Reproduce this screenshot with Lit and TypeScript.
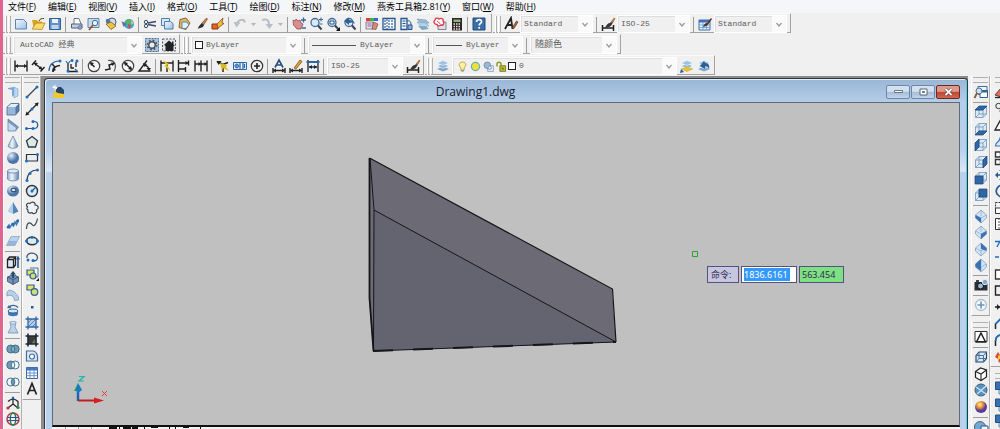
import { LitElement, html, svg, css, nothing } from "lit";
import { customElement } from "lit/decorators.js";

const N = "#24588f";
const K = "#222";

const cubeBase = svg`<path d="M2 6l4-4h8v8l-4 4H2z" fill="#dce9f6"/>`;
const cubeEdges = svg`<path d="M2.500 6l3.500-3.500h7.500V10L10 13.500H2.500zM2.500 6H10v7.500M10 6l3.500-3.500M6 2.500V10h7.500M6 10l-3.500 3.500" fill="none" stroke="#6f94bb" stroke-width=".8"/>`;
const face = (d: string) => svg`${cubeBase}${cubeEdges}<path d=${d} fill="#2f66a6" stroke="#1d4679" stroke-width=".7"/>`;
const iso = (d: string) => svg`<path d="M8 2l5.500 5v3L8 15 2.500 10V7z" fill="#d3e3f3" stroke="#7d9fc2" stroke-width=".8"/><path d="M8 2v6M2.500 7l5.500 3 5.500-3M8 9.500V15" stroke="#8babcb" stroke-width=".7" fill="none"/><path d=${d} fill="#3b73b1"/>`;
const dots = (...p: number[][]) => p.map(([x, y]) => svg`<circle cx=${x} cy=${y} r="1.500" fill="#1b6fc0"/>`);
const ink = (d: string, w = 1.3, c = K) => svg`<path d=${d} fill="none" stroke=${c} stroke-width=${w}/>`;
const solid = (d: string, c = K) => svg`<path d=${d} fill=${c}/>`;
const brush = svg`<path d="M8 8l5.500-6 1 1L10 10z" fill="#c98243" stroke="#4c2c16" stroke-width=".5"/><path d="M9.500 7.500c1 .5 1.500 1 1 2.500-1 2-4 2-6 2.500 1.500-1.500 2-4.500 5-5z" fill="#2b2b2b"/>`;
const lens = svg`<circle cx="7" cy="6.500" r="4" fill="#d8ebfa" stroke="#466c96" stroke-width="1.300"/><path d="M10 9.500l3.500 4" stroke="#37475c" stroke-width="2"/>`;
const layers = svg`<path d="M2 11l6-2.500 6 2.500-6 2.500z" fill="#7da4cc"/><path d="M2 8l6-2.500L14 8l-6 2.500z" fill="#8fb4d8" stroke="#fff" stroke-width=".5"/><path d="M2 5l6-2.500L14 5 8 7.500z" fill="#9fc1e1" stroke="#fff" stroke-width=".5"/>`;
const venn = (a: string, b: string, m: string) => svg`<circle cx="5.800" cy="8" r="4" fill=${a}/><circle cx="10.200" cy="8" r="4" fill=${b}/><path d="M8 4.700a4 4 0 0 1 0 6.600 4 4 0 0 1 0-6.600z" fill=${m}/><circle cx="5.800" cy="8" r="4" fill="none" stroke="#41708f"/><circle cx="10.200" cy="8" r="4" fill="none" stroke="#41708f"/>`;
const hatch = svg`<path d="M4 1.500v13M12 1.500v13M1.500 4h13M1.500 12h13" stroke="#2f66a6" stroke-width="1.300"/>`;

const ICONS: Record<string, unknown> = {
  new: svg`<path d="M2.500 3.500h8l3 3v6.500h-11z" fill="url(#sheet)" stroke="#5d87b3"/>`,
  open: svg`<path d="M2 4h5l1 1.500h4V13H4z" fill="#d9a520"/><path d="M2 13l4-6h9l-3 6.500z" fill="#fbdc6b" stroke="#a87a12" stroke-width=".7"/><path d="M9 5c1-2.500 3-2.500 5-2.500" stroke="#4b3a12" fill="none"/>`,
  save: svg`<path d="M2.500 2.500h11v11h-11z" fill="#5f92c9" stroke="#315e92"/><path d="M5 3h6v4H5z" fill="#e9f2fb"/><path d="M4.500 9h7v4h-7z" fill="#bcd4ec"/>`,
  print: svg`<path d="M5 8V2.500h5L12 8" fill="#fff" stroke="#697b95"/><path d="M2.500 8h10.500v4H2.500z" fill="#c3cedf" stroke="#4f6280"/><circle cx="11" cy="11.500" r="2" fill="#8fa4c0" stroke="#4f6280" stroke-width=".6"/>`,
  preview: svg`<path d="M2 2.500h11v9H2z" fill="#c7dcf1" stroke="#6087b0"/><circle cx="9" cy="7" r="2.700" fill="#eef6fd" stroke="#466c96"/><path d="M7 9l-4 5" stroke="#8b5a2b" stroke-width="1.800"/>`,
  publish: svg`<circle cx="9" cy="6" r="4" fill="#d2dae6" stroke="#4b5f7b"/><path d="M3 8l5-2 5 4-5 3.500z" fill="#f0c33c" stroke="#6e5310" stroke-width=".7"/><circle cx="5" cy="5" r="2.300" fill="#4a78ae"/>`,
  globe: svg`<circle cx="9" cy="8" r="5" fill="#4d9bd0"/><path d="M5 5l5-2 1 4-3 4z" fill="#57b36b"/><path d="M1.500 5l5 3-3 3z" fill="#5e6f91"/><path d="M8 8l3 1-2 4z" fill="#d8453a"/><path d="M11 4l2.500 3-2 2z" fill="#f2d04b"/>`,
  cut: svg`${ink("M6 7l8-1.500M6 8.500l8 1.500", 1.3, "#3a4b66")}<circle cx="4" cy="6" r="1.700" fill="none" stroke="#3a4b66"/><circle cx="4" cy="10" r="1.700" fill="none" stroke="#3a4b66"/>`,
  copy: svg`<path d="M2.500 2.500h8v7h-8z" fill="#dbe9f7" stroke="#4e7db0"/><path d="M5.500 5.500h6l2.500 2V13H5.500z" fill="url(#sheet)" stroke="#4e7db0"/>`,
  paste: svg`<path d="M4 3.500l6-1.500 4 5-4 6.500-7-2z" fill="#e1b868" stroke="#8b6524"/><path d="M6 6h5l2 3-3 3.500H6z" fill="#e6f0fa" stroke="#5c84ad"/>`,
  brush,
  match: svg`<path d="M2 8h6v5H2z" fill="#e6642a" stroke="#8a3310"/><path d="M7 8l6-6-1 5 2 .5L8 12z" fill="#f3bb35" stroke="#7d3c18" stroke-width=".7"/>`,
  undo: svg`${ink("M5 8c1-5 7-5.500 8-1.500", 2, "#b9bec6")}${solid("M1.500 6l7 .5-4 5z", "#b9bec6")}`,
  redo: svg`${ink("M3 4c5-1.500 7 0 7 5", 2, "#b9bec6")}${solid("M6.500 8h7.500l-3.500 5z", "#b9bec6")}`,
  pan: svg`<path d="M2 4l2 1 1-2 2 2 2-1 1 3 2 1-2 5H6L2.500 9z" fill="#d98d8d" stroke="#8d5057" stroke-width=".8"/><path d="M12.500 1.500v5M10 4h5M11 12h4" stroke="#3269a6" stroke-width="1.300"/>`,
  zoom: svg`${lens}<path d="M13 1.500v4M11 3.500h4M11.500 8h3" stroke="#3269a6"/>`,
  zoomWin: svg`${lens}<path d="M5 5h4v3H5z" fill="#fff" stroke="#2a4e78"/><path d="M11 15h4v-4z" fill="#111"/>`,
  zoomPrev: svg`${lens}<path d="M2 5l5-3.500V4c3 0 5 1 6 4-2-2-4-1.500-6-1v2z" fill="#2e5f9b"/>`,
  props: svg`<path d="M2 2h4v3H2z" fill="#e33b3b"/><path d="M6 2h4v3H6z" fill="#39b54a"/><path d="M10 2h4v3h-4z" fill="#3d62d8"/><path d="M2 6h7v7H2z" fill="#e8e2ee" stroke="#6f6480" stroke-width=".8"/><path d="M8 13l1.500-7L14 8l-2 5.500z" fill="#d68b73" stroke="#6a3a30" stroke-width=".6"/><path d="M3.500 8h4M3.500 10h4" stroke="#8a5ea0"/>`,
  design: svg`<path d="M2 2.500h12v11H2z" fill="#fff" stroke="#27568c" stroke-width="1.300"/><path d="M6 3v10M7 5h6M7 8h6M7 11h6M3 5h2M3 8h2M3 11h2" stroke="#4c7fb8" stroke-width="1.300" stroke-dasharray="2 1"/>`,
  palette: svg`<path d="M3 2.500h6v11H3z" fill="#eaf2fa" stroke="#27568c" stroke-width="1.300"/><path d="M4.500 5h3M4.500 7.500h3M4.500 10h3" stroke="#27568c"/><path d="M9 5c3-1 4 1 4 4" fill="none" stroke="#27568c"/><path d="M10 9h4v4.500h-4z" fill="#8cb2dc" stroke="#27568c"/>`,
  sheets: svg`<path d="M2 3l9 1 3 3-8 1z" fill="#97bcd9" stroke="#5f8cb0" stroke-width=".5"/><path d="M2 6l9 1 3 3-8 1z" fill="#b8d2e4" stroke="#6794b6" stroke-width=".5"/><path d="M3 10l8 .5 3 2.500-7 1z" fill="#7fa7c4"/>`,
  markup: svg`<path d="M6 6h8v7.500H6z" fill="#dedfe5" stroke="#7e8594"/><path d="M3 4c0-2 3-2.500 4-1 2-1.500 5 0 4 2 2 2 0 5-2 4-2 1.500-4 1-4-.5-3 0-4-3-2-4.500z" fill="#fff" stroke="#df3d49" stroke-width="1.400"/><path d="M5 5l3.500 3" stroke="#df3d49"/>`,
  calc: svg`<path d="M3 2h10v12.500H3z" fill="#2d2426"/><path d="M4.500 3.500h7v2.500h-7z" fill="#89b878"/><path d="M4.500 8h7M4.500 10.500h7M4.500 13h7" stroke="#e9dedd" stroke-width="1.300" stroke-dasharray="1.500 1"/>`,
  help: svg`<path d="M2 2h12v12H2z" fill="#3a6ea9" stroke="#204a7c"/><path d="M5.500 6c0-3.500 5.500-3 5 0-.3 1.500-2.300 1.500-2.300 3.500M8.200 11v1.700" fill="none" stroke="#fff" stroke-width="1.700"/>`,
  textStyle: svg`${ink("M2 13L8 2l1.500 11M4.500 9h5", 1.8)}<path d="M9 12l4.500-7 1.500 1-4 6.500z" fill="#b9683a" stroke="#3b2517" stroke-width=".6"/>`,
  dimStyle: svg`${ink("M2.500 9v6M13.500 9v6M2.500 12h11", 1.5)}<path d="M5 12c1-3 3-5 5-5l4-5 1 1-3.500 6c-1 2-3.500 2.500-6.500 3z" fill="#3a3531"/><path d="M11 6l3.500-4.500 1 1L12 7z" fill="#c58252"/>`,
  tableStyle: svg`<path d="M2 4h11v10H2z" fill="#e6f0fb" stroke="#3d70b4"/><path d="M2 4h11v2.500H2z" fill="#3d70b4"/><path d="M2 9h11M2 11.500h11M6 6v8M9.500 6v8" stroke="#6b97cd" stroke-width=".8"/><path d="M6 11c1-3 2-4 4-4l4-5 1 1-3.500 5c-1 2-3 2.500-5.500 3z" fill="#54392a"/>`,
  gear: svg`<path d="M1.500 1.500h13v13h-13z" fill="#a9c4df" stroke="#4b6e94" stroke-dasharray="2 1"/><circle cx="8" cy="8" r="3.200" fill="#e8edf2" stroke="#4a4f58" stroke-width="1.400"/><circle cx="8" cy="8" r="4.700" fill="none" stroke="#4a4f58" stroke-width="1.500" stroke-dasharray="1.700 2"/>`,
  home: svg`<path d="M1.500 2h13v12h-13z" fill="#dfe5eb" stroke="#556" stroke-dasharray="2 1.500"/><path d="M3 8l5-4.500L11 6V4.500h1.500V7.500L14 9h-1.500v5h-8V9z" fill="#222"/>`,
  dLinear: svg`${ink("M2 2.500v11M14 2.500v11M2 8h12", 1.4)}${solid("M2 8l3-2v4zM14 8l-3-2v4z")}`,
  dAligned: svg`${ink("M2 7l4-4.500M10.500 13.500l4-4.500M4 5l8.500 6.500", 1.5)}${solid("M4 4.500l4 .5-2.500 3zM12.500 11.500l-4-.5L11 8z")}`,
  dArc: svg`${ink("M2 13C2 7 6 3 12 3", 1.2, "#2b69a8")}${ink("M6 14c0-4 2-6 7-6.500M5 6l3 3", 1.5)}${solid("M5 14l1-5 3 3z")}${dots([13, 3])}`,
  dOrd: svg`${ink("M4 6v7.500h10M7 6v4h3M12 4v5", 1.3)}${ink("M2 3l2 3 2-3M11 11l3 3", 1.2, "#2b69a8")}${dots([4, 13], [8, 2.5], [13, 3])}`,
  dRadius: svg`<circle cx="8" cy="8" r="5.700" fill="#f6f6f6" stroke="#444" stroke-width="1.200"/>${ink("M8.500 9L4.500 5", 1.4)}${solid("M4 4l4 1-3 3z")}`,
  dJog: svg`${ink("M5 2.500c7-1 9 5 6 11", 1.2, "#555")}${ink("M2 12l5-1-1-4 5-1.500", 1.4)}${solid("M12 5l-4-.5 1.500 3.500z")}`,
  dDiam: svg`<circle cx="8" cy="8" r="5.700" fill="#f6f6f6" stroke="#444" stroke-width="1.200"/>${ink("M4.500 4.500l7 7", 1.4)}${solid("M4 4l4 1-3 3zM12 12l-4-1 3-3z")}`,
  dAng: svg`${ink("M13.500 13H2L10 2.500", 1.4)}${ink("M7 7c3 0 5 3 5 5", 1.3)}${solid("M6 5l4 1-2.500 3zM9.500 10h4.500l-2 3z")}`,
  dQuick: svg`${ink("M2 2.500v11M14 2.500v11M8 6v8M2 5h12", 1.4)}${solid("M4 2l6 4-2 1 4 6-7-5 2-1z", "#e2c318")}`,
  dBase: svg`${ink("M2.500 2v12M2.500 5h10M12.500 2.500v5M2.500 11h7M9.500 9v5", 1.4)}${solid("M12.500 5l-3-2v4z")}`,
  dCont: svg`${ink("M2 2.500v11M8 2.500v11M14 2.500v11M2 6h12", 1.4)}${solid("M8 6L5.500 4v4zM14 6l-2.500-2v4z")}`,
  leader: svg`${ink("M2 3.500l6 3 5-2M8 6v8", 1.5)}${solid("M5 5l7 2-1 2 3 4-6-3-1 3z", "#d9bb1f")}${solid("M1.500 3h5l-3 4z")}`,
  tol: svg`<path d="M1.500 4.500h13v7h-13z" fill="#e3eefa" stroke="#2b69a8"/>${ink("M8 4.500v7M11 4.500v7M12.500 6v4", 1.2, "#2b69a8")}<circle cx="4.800" cy="8" r="1.800" fill="none" stroke="#2b69a8"/>${ink("M4.800 5.500v5M2.500 8h5", 0.8, "#2b69a8")}`,
  center: svg`<circle cx="8" cy="8" r="5.700" fill="none" stroke="#333" stroke-width="1.200"/>${ink("M8 5v6M5 8h6", 1.6)}`,
  dEdit: svg`${ink("M4 9.500l4-7.500 4 7.500M5.500 7h5", 1.6, "#24507f")}${ink("M2 10v5M14 10v5M2 12.500h12", 1.4)}${solid("M2 12.500l3-2v4zM14 12.500l-3-2v4z")}`,
  dText: svg`${ink("M2 10v5M14 10v5M2 12.500h12", 1.4)}<path d="M6 10l6-8 2 1.500L8 11z" fill="#e0a32c" stroke="#6b3d14" stroke-width=".7"/>${solid("M2 12.500l3-2v4zM14 12.500l-3-2v4z")}`,
  dUpd: svg`${ink("M3 2v12M13 2v12", 1.3)}${ink("M1.500 4h13M4 9h8", 1.8, "#2b69a8")}${solid("M4 9l3-2v4zM12 9L9 7v4z")}`,
  layers,
  layersBack: svg`${layers}<path d="M2 11l6-2.500 6 2.500-6 3z" fill="#e3c03c"/><path d="M1 15l1-4 3 3z" fill="#245a97"/>`,
  layerPrev: svg`${layers}<path d="M4 8l4-5 1 2c3 0 5 2 4 6-1-2-2-3-4-3v3z" fill="#2d5f96"/>`,
  bulb: svg`<path d="M8 2.500c5 0 5 5 2 7v3H6v-3C3 7.500 3 2.500 8 2.500z" fill="#fff2a0" stroke="#a99335"/><path d="M6.500 13.500h3" stroke="#555"/>`,
  sun: svg`<circle cx="8" cy="8" r="5" fill="#f5df38" stroke="#5eb0b8" stroke-width="1.500"/>`,
  freeze: svg`<path d="M7 7h7v7H7z" fill="#e9f0f7" stroke="#8498b1"/><circle cx="6.500" cy="6.500" r="4" fill="#9db9d6" stroke="#6788ad"/><circle cx="9.500" cy="9.500" r="2" fill="#e4eef8" stroke="#6788ad"/>`,
  lock: svg`<path d="M6 7h7v7H6z" fill="#b6bf2d" stroke="#6d7418"/><path d="M8 10h2v2" stroke="#5c6212" fill="none"/><path d="M2.500 8V5c0-3 5-3 5 0v2" fill="none" stroke="#8f9820" stroke-width="1.800"/>`,
  polysolid: svg`<path d="M3 4l6-1v8l-2 2V6L3 5z" fill="#7ba8d8"/><path d="M9 3l4 2v7l-4 2z" fill="#bcd7f1" stroke="#78a2cd" stroke-width=".6"/>`,
  box: svg`<path d="M2 6l4-3.500h8V10l-3.500 4H2z" fill="#5578a5"/><path d="M2 6h8.500v8H2z" fill="#98b7d8"/><path d="M2 6l4-3.500h8L10.500 6z" fill="#e3eef9"/><path d="M2 6l4-3.500h8V10l-3.500 4H2z" fill="none" stroke="#45678f" stroke-width=".8"/>`,
  wedge: svg`<path d="M3 2l10.500 8-3 4H3z" fill="#7397c0"/><path d="M3 5l8 6-1 3H3z" fill="#c5daee"/><path d="M3 2l10.500 8-3 4H3z" fill="none" stroke="#5578a1" stroke-width=".7"/>`,
  cone: svg`<path d="M8 2l5 10c-1 3-9 3-10 0z" fill="url(#metal)" stroke="#6584a8" stroke-width=".8"/>`,
  sphere: svg`<circle cx="8" cy="8" r="6" fill="url(#ball)"/>`,
  cylinder: svg`<path d="M2.500 4v8c1 2.500 10 2.500 11 0V4z" fill="url(#metal)"/><ellipse cx="8" cy="4" rx="5.500" ry="2" fill="#dfeaf6" stroke="#6584a8" stroke-width=".8"/><path d="M2.500 4v8c1 2.500 10 2.500 11 0V4" fill="none" stroke="#6584a8" stroke-width=".8"/>`,
  torus: svg`<ellipse cx="8" cy="8" rx="6" ry="5.500" fill="url(#ball)"/><ellipse cx="8.500" cy="7" rx="2.500" ry="1.700" fill="#eff4fa" stroke="#31557f" stroke-width="1.200"/>`,
  pyramid: svg`<path d="M8 2l5.500 9.500L8 14z" fill="#5684b6"/><path d="M8 2L2.500 11.500 8 14z" fill="#b3cfeb"/>`,
  helix: svg`${ink("M2 12l2-3 1 2.500 2-3.500 1.500 2 1.500-4 1.500 2.500 2-5", 1.5, "#4676ad")}${dots([3.500, 11], [8, 8], [12.500, 5])}`,
  surface: svg`<path d="M6 3.500h8.500L10 12.500H1.500z" fill="#96b6d9"/><path d="M6 3.500h8.500L12 8H4z" fill="#b9d1ea"/><path d="M6 3.500h8.500L10 12.500H1.500z" fill="none" stroke="#86a5c7" stroke-width=".7"/>`,
  extrude: svg`<path d="M2.500 5.500h6v8h-6zM2.500 5.500l2-2.500h6L8.500 5.500M10.500 3v8l-2 2.500" fill="#dce8f4" stroke="#222" stroke-width="1.300"/><path d="M13 14V4" stroke="${N}" stroke-width="1.600"/><path d="M13 1.500l2 4h-4z" fill="#245a97"/>`,
  presspull: svg`<path d="M2.500 7L8 4.500 13.500 7v4.500L8 14.500l-5.500-3z" fill="#7292b8" stroke="#324a69" stroke-width=".8"/><path d="M2.500 7L8 9.500 13.500 7M8 9.500v5" fill="none" stroke="#324a69" stroke-width=".8"/><path d="M8 1l3 3.500H9V8H7V4.500H5z" fill="#29496f"/>`,
  sweep: svg`<path d="M2 6c1-4 4-3 7-1s5 5 4.500 8l-4 .5C9 9 6 7 2 9z" fill="#b9d0e8" stroke="#7195bb" stroke-width=".8"/>`,
  revolve: svg`<path d="M3 8h10v3c0 3-10 3-10 0z" fill="#3e79b8"/><ellipse cx="8" cy="8" rx="5" ry="2" fill="#d5e5f5" stroke="#35659a"/><path d="M4 4.500c2-3 7-2.500 9 0" fill="none" stroke="#35659a" stroke-width="1.300"/><path d="M2 5l4.500.5L4 2z" fill="#35659a"/>`,
  loft: svg`<path d="M5 2h6l-1 5 3 6H3l3-6z" fill="#bcd1e8" stroke="#7092b7" stroke-width=".8"/><ellipse cx="8" cy="2.800" rx="3" ry="1.200" fill="#eaf2fa" stroke="#7092b7" stroke-width=".7"/>`,
  union: venn("#6d9cb3", "#6d9cb3", "#88b0c3"),
  subtract: venn("#6d9cb3", "#f4f8fb", "#f4f8fb"),
  intersect: venn("#f4f8fb", "#f4f8fb", "#6d9cb3"),
  move3: svg`${ink("M8 2v7l-5 4M8 9l5 4M3 6.500c3-3 7-3 10 0v5", 1.2)}<circle cx="3" cy="13" r="1.600" fill="#c0392b"/><circle cx="13" cy="12.500" r="1.600" fill="#2a8a3c"/><path d="M8 1l2 3.500H6z" fill="#1f5fa8"/>`,
  rotate3: svg`<circle cx="8" cy="8" r="6" fill="#eef" stroke="#c23a3a" stroke-width="1.500"/><ellipse cx="8" cy="8" rx="2.700" ry="6" fill="none" stroke="#277a45" stroke-width="1.300"/>${ink("M2 6.500h12M2 9.500h12", 1.2, "#31508f")}`,
  line: svg`${ink("M3 13L13 3", 1.2, "#38454f")}${dots([3, 13], [13, 3])}`,
  xline: svg`${ink("M2 14L14 2", 1.2)}${solid("M1.500 14.500l1-4 3 3zM14.500 1.500l-1 4-3-3z")}${dots([8, 8])}`,
  pline: svg`${ink("M2 11.500h8c5 0 5-7 0-7H9", 1.2, "#28568b")}${dots([2.5, 11.5], [9, 11.5], [9, 4.5])}`,
  polygon: svg`<path d="M8 2.500l5.500 4.200-2 6.300h-7l-2-6.300z" fill="#dcebe9" stroke="#2e3b43" stroke-width="1.300"/>`,
  rect: svg`<path d="M2.500 4.500h11v6.500h-11z" fill="#e8eef4" stroke="#333" stroke-width="1.200"/>${dots([13.500, 4.500], [2.500, 11])}`,
  arc: svg`${ink("M3 13.500C3 7 7 3 13.500 3", 1.2, "#38454f")}${dots([3, 13.500], [6, 6.500], [13.500, 3])}`,
  circle: svg`<circle cx="8" cy="8" r="5.500" fill="#dbe9f2" stroke="#28333c" stroke-width="1.400"/>${ink("M8 8l3.500-3.500", 1.2, N)}${dots([8, 8])}`,
  cloud: svg`<path d="M4 7c-3-1-1-5 2-3.500C8 1 12 2.500 11 5c4 0 4 4 1.500 5 1 3-3 5-4.500 2.500C5 14 3 12 4 10c-2-1-1-3 0-3z" fill="#eef3f5" stroke="#3b454d" stroke-width="1.200"/>`,
  spline: svg`${ink("M2.500 13C3 4 7 7 8.500 9s4-1 5-6.500", 1.2, "#38454f")}`,
  ellipse: svg`<ellipse cx="8" cy="8" rx="5.500" ry="3.700" fill="#d7ebf0" stroke="#28333c" stroke-width="1.400"/>${dots([2.500, 8], [8, 4.300], [13.500, 8])}`,
  earc: svg`${ink("M3 9c-1-7 11-6 10.500 0-.5 3-3 3-5 2.500", 1.3, "#40566f")}${dots([4, 11], [9, 11.500])}`,
  insert: svg`<path d="M6 2h8v9h-4" fill="#f3f5f7" stroke="#4e7297"/><path d="M3 4h7v5H3z" fill="#e5e05f" stroke="#2b5f98" stroke-width="1.200"/><circle cx="9" cy="10" r="3" fill="#d2db74" stroke="#2b5f98" stroke-width="1.200"/><path d="M12 15h3v-3z" fill="#111"/>`,
  block: svg`<path d="M3 3h7v5H3z" fill="#e5e05f" stroke="#2b5f98" stroke-width="1.200"/><circle cx="10.500" cy="10" r="3.300" fill="#d2db74" stroke="#2b5f98" stroke-width="1.200"/>`,
  point: svg`<path d="M7 7h2.500v2.500H7z" fill="#1b5fa8"/>`,
  hatch: svg`<path d="M4 4h8v8H4z" fill="#b5cde5"/><path d="M4 8l4-4M4 12l8-8M8 12l4-4" stroke="#5e8abb"/>${hatch}`,
  gradient: svg`<path d="M4 4h8v8H4z" fill="#3c3c35"/><path d="M7 12l5-6v6z" fill="#7a7a35"/><path d="M4 1.500v13M12 1.500v13M1.500 4h13M1.500 12h13" stroke="#1b2740" stroke-width="1.600"/>`,
  region: svg`<path d="M2.500 3h7c4 1 4.500 5 4 10h-11z" fill="#dce9f5" stroke="#42709f" stroke-width="1.200"/><circle cx="8" cy="8.500" r="2.500" fill="#fff" stroke="#42709f" stroke-width="1.200"/>`,
  table: svg`<path d="M2.500 2.500h11v11h-11z" fill="#fff" stroke="#3567a4"/><path d="M2.500 2.500h11v3h-11z" fill="#4279bb"/>${ink("M2.500 8h11M2.500 10.700h11M6 5v8.500M10 5v8.500", 0.9, "#5b8bc6")}`,
  mtext: svg`${ink("M3.500 13.500L8 2.500l4.500 11M5 9.500h6", 1.7)}`,
  views: svg`<path d="M5 2.500h9v8H5z" fill="#f2f6fa" stroke="#3c6ea5"/><path d="M7 6.500h7.500v7H7z" fill="#fff" stroke="#2a5c96"/><path d="M7 6.500h7.500v2H7z" fill="#2f66a6"/><circle cx="6" cy="7" r="3" fill="#cfe0ee" stroke="#55718e"/><path d="M4 9l-2.500 5" stroke="#8b5a2b" stroke-width="1.800"/>`,
  top: face("M2 6l4-4h8l-4 4z"),
  bottom: face("M2 14l4-4h8l-4 4z"),
  left: face("M2 6l4-4v8l-4 4z"),
  right: face("M10 6l4-4v8l-4 4z"),
  front: face("M2 6h8v8H2z"),
  back: face("M6 2h8v8H6z"),
  sw: iso("M2.500 7L8 10v5l-5.500-5z"),
  se: iso("M13.500 7L8 10v5l5.500-5z"),
  ne: iso("M8 2l5.500 5v3L8 8z"),
  nw: iso("M8 2L2.500 7v3L8 14V8z"),
  camera: svg`<path d="M1.500 5h13v8.500h-13z" fill="#2a2f36"/><path d="M3 3h3v2H3z" fill="#444"/><circle cx="7.500" cy="9" r="3" fill="#9db9d4" stroke="#111"/><circle cx="12" cy="5" r="2.700" fill="#7fa7cf" stroke="#e4ecf4"/>`,
  orbit: svg`<circle cx="8" cy="8" r="5.500" fill="#f4f8fb" stroke="#a9bccf" stroke-width="1.300"/>${ink("M8 4.500v7M4.500 8h7", 1.6, "#6b94bd")}`,
  wire2d: svg`<path d="M2 2.500h12v10H2z" fill="#fff" stroke="#333"/>${ink("M8 4l4.500 9h-9z", 1.5)}`,
  wire3d: svg`<path d="M3 6.500l3-3.500h7.500v6.500L10.500 13H3z" fill="#dbe8f5" stroke="#1f3c60" stroke-width="1.100"/>${ink("M3 6.500h7.500V13M10.500 6.500L13.500 3M6 3v6.500h7.500M6 9.500L3 13", 1, "#44719f")}`,
  hidden: svg`<path d="M2.500 5.500l5-3.500 6 2v7L8 14.500l-5.500-3z" fill="#fff" stroke="#222" stroke-width="1.200"/>${ink("M2.500 5.500L8 8l5.500-4M8 8v6.500", 1.1)}`,
  realistic: svg`<circle cx="8" cy="8" r="6" fill="#5293c3" stroke="#4a5b6e"/>${ink("M3 5l10 7M13 4L4 12", 1.3, "#cfe5f4")}`,
  conceptual: svg`<circle cx="8" cy="8" r="6" fill="url(#warm)"/>`,
  manage: svg`<circle cx="7" cy="7" r="5.500" fill="#76a9d1" stroke="#47678a"/><path d="M8 6h7v7H8z" fill="#eef5fc" stroke="#27568c"/>`,
  erase: svg`<path d="M1 11l6-7 5 3-5 6z" fill="#e46a5d" stroke="#5b4340"/>${ink("M1 13.500h9")}`,
  copy2: svg`<circle cx="4.500" cy="5" r="2.700" fill="none" stroke="#333"/><circle cx="9" cy="10" r="3" fill="none" stroke="#333"/>`,
  mirror: svg`<path d="M7 2v11H1z" fill="#fff" stroke="#222" stroke-width="1.300"/><path d="M9 2v11h5z" fill="#5b90c8"/>`,
  offset: svg`<path d="M1.500 12c0-5 4-3 4.500-8 4-2 7 2 7 8z" fill="#d7e9fa" stroke="#3c77b5" stroke-width="1.200"/>`,
  array: svg`<path d="M1.500 2h5v5h-5zM1.500 9.500h5v5h-5zM9 2h5v5H9z" fill="#fff" stroke="#333" stroke-width="1.400"/>`,
  move: svg`${ink("M8 2v12M2 8h12", 1.6, N)}${solid("M1 8l3-3v6zM8 1l3 3H5zM8 15l3-3H5z", N)}`,
  rotate: svg`${ink("M10 3.500C4 0 0 8 4 12s9 2 9-3", 1.7, N)}`,
  scale: svg`<path d="M1.500 2.500h12v11h-12z" fill="#eef3f7" stroke="#333" stroke-dasharray="2 1"/><path d="M1.500 8h8v5.500h-8z" fill="#fff" stroke="#333"/>`,
  stretch: svg`<path d="M1.500 2.500h12v11h-12z" fill="#fff" stroke="#333"/><path d="M5 2v12" stroke="#555" stroke-dasharray="2 1"/>`,
  trim: svg`${ink("M1 8.500h5l4-6M6 8l-3 6", 1.3, "#1b6fc0")}`,
  extend: svg`${ink("M1 8h4M7 8h6", 1.5, "#1b6fc0")}`,
  breakAt: svg`<path d="M1.500 4h12v9h-12z" fill="#fff" stroke="#333" stroke-width="1.300"/>`,
  brk: svg`${ink("M7 4H1.500v9h12V4", 1.4)}${dots([7, 4])}`,
  join: svg`${ink("M1 8h12", 1.6)}${solid("M6 8L3 5v6z")}`,
  chamfer: svg`${ink("M1.500 14V9L8 2.500h6", 1.5)}${ink("M1.500 9L8 2.500", 1.7, "#1b6fc0")}`,
  fillet: svg`${ink("M1.500 14v-5c0-4 3-6 6-6H14", 1.5)}${ink("M1.500 9c0-4 3-6 6-6", 1.7, "#1b6fc0")}`,
  explode: svg`<path d="M1 9l3-5 2 3 5-5-1 6 3 2-5 1-3 4-1-4z" fill="#dd4a2f"/><path d="M4 8l4-2-1 4-3 2z" fill="#f3d23e"/>`,
  order: svg`<path d="M5 6h9v8H5z" fill="#cddff0" stroke="#6b8db1"/><path d="M1.500 2h8v7.500h-8z" fill="#3a70ad" stroke="#234e80"/>`,
};

const S = "|";
const FILE_BAR = ["new", "open", "save", S, "print", "preview", "publish", "globe", S, "cut", "copy", "paste", "brush", "match", S, "undo", "v", "redo", "v", S, "pan", "zoom", "zoomWin", "zoomPrev", S, "props", "design", "palette", "sheets", "markup", "calc", S, "help"];
const DIM_BAR = ["dLinear", "dAligned", "dArc", "dOrd", S, "dRadius", "dJog", "dDiam", "dAng", S, "dQuick", "dBase", "dCont", S, "leader", "tol", "center", S, "dEdit", "dText", "dUpd", S];
const SOLIDS = ["polysolid", "box", "wedge", "cone", "sphere", "cylinder", "torus", "pyramid", "helix", "surface", S, "extrude", "presspull", "sweep", "revolve", "loft", S, "union", "subtract", "intersect", S, "move3", "rotate3"];
const DRAW = ["line", "xline", "pline", "polygon", "rect", "arc", "circle", "cloud", "spline", "ellipse", "earc", "insert", "block", "point", "hatch", "gradient", "region", "table", "mtext"];
const VIEWS = ["views", S, "top", "bottom", "left", "right", "front", "back", S, "sw", "se", "ne", "nw", S, "camera", S, "orbit"];
const STYLES = ["wire2d", S, "wire3d", "hidden", "realistic", "conceptual", S, "manage"];
const MODIFY = ["erase", "copy2", "mirror", "offset", "array", "move", "rotate", "scale", "stretch", "trim", "extend", "breakAt", "brk", "join", "chamfer", "fillet", "explode"];

const MENUS: [string, string][] = [["文件", "F"], ["编辑", "E"], ["视图", "V"], ["插入", "I"], ["格式", "O"], ["工具", "T"], ["绘图", "D"], ["标注", "N"], ["修改", "M"], ["燕秀工具箱2.81", "Y"], ["窗口", "W"], ["帮助", "H"]];

@customElement("app-root")
export class AppRoot extends LitElement {
  static styles = css`
    :host {
      display: flex;
      height: 100vh;
      overflow: hidden;
      background: #f0f0f0;
      color: #1c1c1c;
      font: 10px "Noto Sans", "Noto Sans CJK SC", sans-serif;
    }
    *, *::before, *::after { box-sizing: border-box; }
    button, select, input { font: inherit; color: inherit; margin: 0; padding: 0; border: 0; background: none; }
    svg { display: block; flex: none; }
    .defs { position: absolute; width: 0; height: 0; }
    .edge { flex: none; width: 3px; background: #e0648f; }
    .app { flex: 1; min-width: 0; display: flex; flex-direction: column; }

    .menu { flex: none; display: flex; gap: 12px; height: 13px; padding-left: 5px; background: #f5f6f9; }
    .menu button { flex: none; height: 13px; white-space: nowrap; color: #000; font: 9px/12px "Open Sans", "Noto Sans CJK SC", sans-serif; }

    .row { flex: none; display: flex; gap: 1px; height: 21px; }
    .bar {
      display: flex; align-items: center; height: 20px; padding: 2px 2px 0;
      border-right: 1px solid #a3a3a3; border-bottom: 1px solid #a3a3a3;
      border-top: 1px solid #fbfbfb;
    }
    .bar.wide { padding-right: 4px; }
    .grip {
      flex: none; width: 6px; height: 17px; margin-right: 1px;
      border-left: 1px solid #fff; border-right: 1px solid #b0b0b0;
    }
    .grip::before { content: ""; display: block; width: 3px; height: 17px; border-left: 1px solid #b0b0b0; border-right: 1px solid #fff; }
    .tool { flex: none; width: 17px; height: 17px; display: grid; place-items: center; }
    .drop { flex: none; width: 10px; height: 17px; display: grid; place-items: center; }
    .sep { flex: none; width: 5px; height: 15px; display: grid; justify-content: center; }
    .sep::before { content: ""; width: 1px; background: #9c9c9c; }

    .combo {
      flex: none; display: flex; align-items: center; height: 18px; margin: 0 1px; width: 73px;
      padding-left: 3px; background: #f0f0f0; border: 1px solid #fff; box-shadow: inset 1px 1px 0 #dedede;
      color: #5c5c5c; font: 8px/16px "Liberation Mono", "Noto Sans CJK SC", monospace;
    }
    .combo select { flex: 1; min-width: 0; height: 16px; appearance: none; outline: 0; }
    .combo .chev { width: 14px; height: 16px; background: #fafafa; }
    .combo .swatch { flex: none; width: 8px; height: 8px; margin: 0 3px 0 0; border: 1px solid #222; background: #fff; }
    .combo .tiny { display: grid; width: 13px; place-items: center; }
    .combo .rule { flex: none; height: 1px; background: #555; margin-right: 4px; }
    .combo .long { width: 44px; }
    .combo .short { width: 26px; }
    .combo.dims { width: 76px; }
    .workspace { width: 129px; padding-left: 6px; }
    .color { width: 110px; }
    .linetype { width: 117px; }
    .weight { width: 91px; }
    .plot { width: 87px; padding-left: 4px; font-size: 9px; }
    .layer { width: 225px; }

    .work { flex: 1; min-height: 0; display: flex; }
    .dock { flex: none; display: flex; flex-direction: column; gap: 5px; width: 19px; overflow: hidden; }
    .strip {
      flex: none; padding: 1px 1px 2px; display: flex; flex-direction: column; align-items: center;
      border-right: 1px solid #b0b0b0; border-bottom: 1px solid #a3a3a3; border-left: 1px solid #fff;
    }
    .strip .grip { width: 15px; height: 6px; margin: 0 0 1px; border: 0; border-top: 1px solid #b0b0b0; border-bottom: 1px solid #b0b0b0; }
    .strip .grip::before { display: none; }
    .strip .tool { height: 16px; }
    .strip .tool:nth-child(odd) { height: 17px; }
    .strip .sep { width: 15px; height: 4px; align-content: center; }
    .strip .sep::before { width: 15px; height: 1px; }
    .dock.cut { width: 10px; }
    .dock.cut .strip { width: 24px; }

    .mdi { flex: 1; min-width: 0; display: flex; padding: 2px 0 0 3px; background: #8b8b8b; margin-right: 3px; }
    .window {
      flex: 1; min-width: 0; display: flex; flex-direction: column;
      border: 1px solid #33373c; border-bottom: 0; border-radius: 4px 4px 0 0;
      background: linear-gradient(#9ab6d6 0, #b5cee9 24px, #b9d1ea 70px, #d9e8f6 92px, #b9d1ea 94px);
      box-shadow: inset 1px 1px 0 #e4eef8, inset -1px 0 0 #4fd0ea;
    }
    .title { flex: none; display: flex; align-items: center; height: 23px; padding: 2px 7px 0; }
    .title h1 { flex: 1; margin: 0; text-align: center; font: 12px/20px "Open Sans", "Noto Sans", sans-serif; color: #16202c; }
    .controls { display: flex; gap: 1px; }
    .controls button {
      width: 24px; height: 14px; display: grid; place-items: center; border: 1px solid #6f88a6; border-radius: 2px;
      background: linear-gradient(#d3e0ef 45%, #a5bcd6 50%, #c2d5ea);
    }
    .controls .close { border-color: #6b2b25; background: linear-gradient(#dc9a8c 45%, #bd4430 50%, #d0694f); }
    .canvas {
      flex: 1; min-height: 0; position: relative; margin: 0 7px; background: #c0c0c0;
      border: 1px solid #5e6a78; border-bottom: 2px solid #111;
    }
    .canvas > svg { position: absolute; inset: 0; width: 100%; height: 100%; }
    .canvas > .ucs { inset: auto auto 19px 20px; width: 40px; height: 40px; }
    .prompt { position: absolute; left: 654px; top: 163px; display: flex; gap: 2px; font: 9px/15px "Noto Sans", "Noto Sans CJK SC", sans-serif; color: #2d2d50; }
    .prompt > * { height: 17px; border: 1px solid #55527f; }
    .prompt label { width: 32px; padding-left: 3px; background: #c8c6df; }
    .prompt .field { display: flex; align-items: center; width: 56px; padding-left: 2px; background: #fff; }
    .prompt .field input { width: 46px; height: 13px; background: #3399ff; color: #fff; outline: 0; }
    .prompt .second { width: 45px; padding-left: 2px; background: #7fe083; outline: 0; }
    .tabs { flex: none; height: 2px; margin: 0 7px; background: #f4f4f4; overflow: hidden; }
  `;

  private icon(name: string, size = 16) {
    return html`<svg width=${size} height=${size} viewBox="0 0 16 16" aria-hidden="true">${ICONS[name]}</svg>`;
  }

  private tool(name: string) {
    if (name === S) return html`<span class="sep"></span>`;
    if (name === "v")
      return html`<button class="drop" aria-label="more"><svg width="5" height="3"><path d="M0 0h5L2.500 3z" fill="#b5b5b5" /></svg></button>`;
    return html`<button class="tool" aria-label=${name}>${this.icon(name)}</button>`;
  }

  private combo(kind: string, label: string, value: string, prefix: unknown = nothing) {
    return html`<div class="combo ${kind}">
      ${prefix}<select aria-label=${label}><option>${value}</option></select>
      <svg class="chev" viewBox="0 0 14 16"><path d="M4.500 7L7 10l2.500-3" fill="none" stroke="#999" stroke-width="1.200" /></svg>
    </div>`;
  }

  private strip(tools: string[]) {
    return html`<div class="strip"><span class="grip"></span>${tools.map((t) => this.tool(t))}</div>`;
  }

  private drawing() {
    return html`<svg>
      <path d="M317 55L559 186l4 53-243 9-4-53z" fill="#6c6b75" />
      <path d="M321 107l242 132-243 9z" fill="#646370" />
      <g fill="none" stroke="#16161a">
        <path d="M316.500 55L559.500 186l3.500 53" stroke-width="1.200" />
        <path d="M317 55l4 52 242 132M321 107l-.500 141" stroke-width="1" />
        <path d="M316.500 55v140l4 53" stroke-width="1.800" />
        <path d="M320 248l243-9" stroke-width="1" />
        <path d="M320 248l243-9" stroke-width="2" stroke-dasharray="20 20" />
      </g>
      <path d="M639.500 148.500h5v5h-5z" fill="none" stroke="#2da036" />
    </svg>`;
  }

  private ucs() {
    return html`<svg class="ucs" viewBox="0 0 40 40">
      <path d="M5 35V22" stroke="#1c66b5" stroke-width="2.500" />
      <path d="M1 25l4-8v8z" fill="#29a344" /><path d="M5 17l4 7-4 3-2-3z" fill="#1976c8" />
      <path d="M5 34.500h18" stroke="#c31c1c" stroke-width="2" /><path d="M21 31.500l10 3-10 3z" fill="#d81e1e" />
      <path d="M6 10.500h5L6 15h5" fill="none" stroke="#20b5a4" stroke-width="1.200" />
      <path d="M29 25l5 5M34 25l-5 5" stroke="#e03c3c" stroke-width="1" />
    </svg>`;
  }

  render() {
    return html`
      <svg class="defs" aria-hidden="true"><defs>
        <linearGradient id="sheet" x2="1" y2="1"><stop stop-color="#f3f9ff" /><stop offset="1" stop-color="#9cc0e4" /></linearGradient>
        <linearGradient id="metal"><stop stop-color="#8babd0" /><stop offset=".4" stop-color="#f2f7fc" /><stop offset="1" stop-color="#6285b0" /></linearGradient>
        <radialGradient id="ball" cx=".35" cy=".3"><stop stop-color="#e6f0fa" /><stop offset="1" stop-color="#4c75a8" /></radialGradient>
        <radialGradient id="warm" cx=".4" cy=".3"><stop stop-color="#fff0b0" /><stop offset=".5" stop-color="#ef9a2c" /><stop offset="1" stop-color="#5a3a9a" /></radialGradient>
      </defs></svg>
      <div class="edge"></div>
      <div class="app">
        <nav class="menu">${MENUS.map(([t, k]) => html`<button>${t}(<u>${k}</u>)</button>`)}</nav>
        <div class="row">
          <div class="bar wide"><span class="grip"></span>${FILE_BAR.map((t) => this.tool(t))}</div>
          <div class="bar">
            <span class="grip"></span>${this.tool("textStyle")}${this.combo("", "text style", "Standard")}${this.tool(S)}
            ${this.tool("dimStyle")}${this.combo("", "dimension style", "ISO-25")}${this.tool(S)}
            ${this.tool("tableStyle")}${this.combo("", "table style", "Standard")}
          </div>
        </div>
        <div class="row">
          <div class="bar">
            <span class="grip"></span>${this.combo("workspace", "workspace", "AutoCAD 经典")}${this.tool("gear")}${this.tool("home")}
          </div>
          <div class="bar">
            <span class="grip"></span>${this.combo("color", "color", "ByLayer", html`<span class="swatch"></span>`)}${this.tool(S)}
            ${this.combo("linetype", "linetype", "ByLayer", html`<span class="rule long"></span>`)}${this.tool(S)}
            ${this.combo("weight", "lineweight", "ByLayer", html`<span class="rule short"></span>`)}${this.tool(S)}
            ${this.combo("plot", "plot style", "随颜色")}
          </div>
        </div>
        <div class="row">
          <div class="bar">
            <span class="grip"></span>${DIM_BAR.map((t) => this.tool(t))}${this.combo("dims", "dimension style", "ISO-25")}${this.tool("dimStyle")}
          </div>
          <div class="bar">
            <span class="grip"></span>${this.tool("layers")}
            ${this.combo("layer", "layer", "0", html`${["bulb", "sun", "freeze", "lock"].map((n) => html`<span class="tiny">${this.icon(n, 13)}</span>`)}<span class="swatch"></span>`)}
            ${this.tool("layersBack")}${this.tool("layerPrev")}
          </div>
        </div>
        <div class="work">
          <div class="dock">${this.strip(SOLIDS)}</div>
          <div class="dock">${this.strip(DRAW)}</div>
          <main class="mdi">
            <section class="window">
              <header class="title">
                <svg width="13" height="13" viewBox="0 0 13 13"><path d="M4 2h5l3 3v7H4z" fill="#27446b" /><path d="M2 6l4 2 6 1v4H1z" fill="#f0c92c" /><path d="M3 0v5M.500 2.500h5M1 1l4 3" stroke="#fff" /></svg>
                <h1>Drawing1.dwg</h1>
                <div class="controls">
                  <button aria-label="minimize"><svg width="9" height="5"><path d="M.500 1.500h8v2h-8z" fill="#fff" stroke="#4a5a70" stroke-width=".8" /></svg></button>
                  <button aria-label="restore"><svg width="9" height="8"><path d="M1 1h7v6H1z" fill="#fff" stroke="#4a5a70" stroke-width=".9" /><path d="M3.500 3.500h2v1h-2z" fill="#8aa" stroke="#4a5a70" stroke-width=".8" /></svg></button>
                  <button class="close" aria-label="close"><svg width="9" height="8"><path d="M1.500 1l6 6M7.500 1l-6 6" stroke="#5d2a26" stroke-width="3" /><path d="M1.500 1l6 6M7.500 1l-6 6" stroke="#fff" stroke-width="1.800" /></svg></button>
                </div>
              </header>
              <div class="canvas">
                ${this.drawing()}${this.ucs()}
                <div class="prompt">
                  <label for="first">命令:</label>
                  <span class="field"><input id="first" value="1836.6161" /></span>
                  <input class="second" aria-label="second value" value="563.454" />
                </div>
              </div>
              <div class="tabs"><svg width="160" height="2"><path d="M13 0h1v2h-1zM26 0h1v2h-1zM39 0h1v2h-1z" fill="#999" /><path d="M57 0h8v2h-8zM67 0h1v2h-1zM71 0h8v2h-8zM80 0h6v2h-6zM92 0h1v2h-1zM99 0h7v1h-7zM117 0h1v2h-1zM123 0h1v2h-1zM131 0h6v1h-6zM148 0h1v2h-1z" fill="#111" /></svg></div>
            </section>
          </main>
          <div class="dock">${this.strip(VIEWS)}${this.strip(STYLES)}</div>
          <div class="dock cut">${this.strip(MODIFY)}${this.strip(["order", "order", "order"])}</div>
        </div>
      </div>
    `;
  }
}
